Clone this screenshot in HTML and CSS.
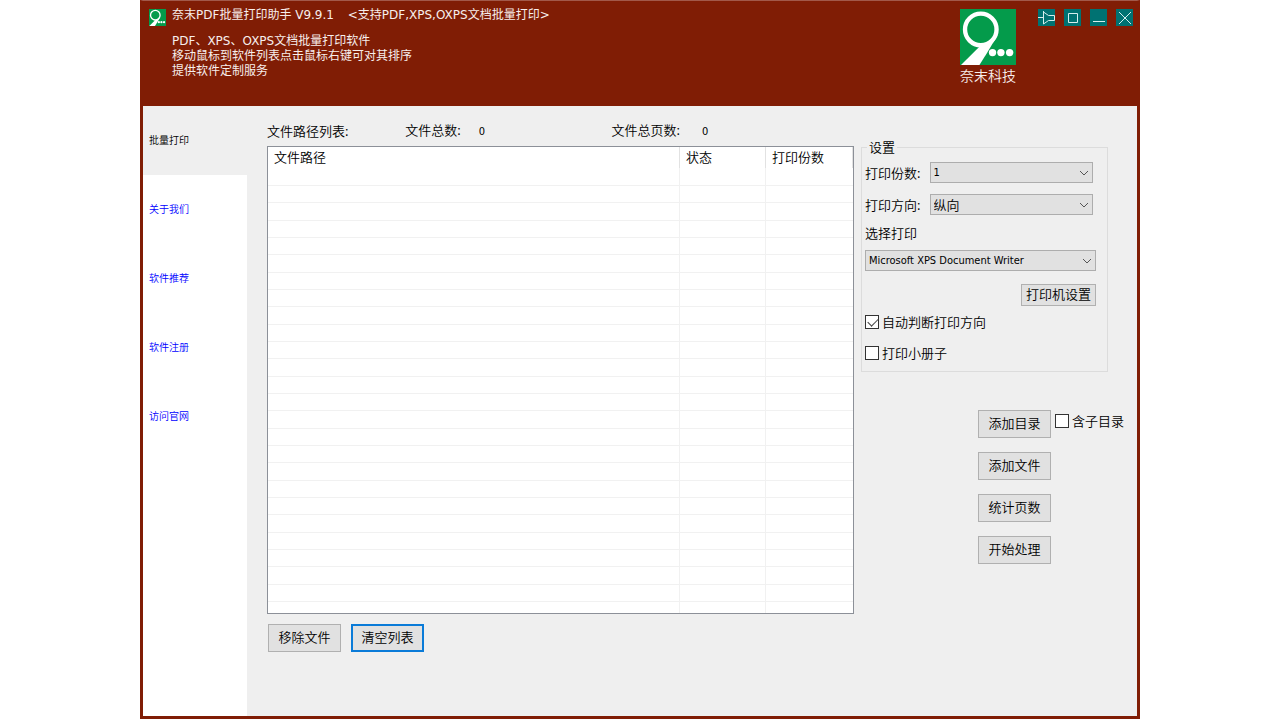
FILE: index.html
```html
<!DOCTYPE html>
<html lang="zh-CN">
<head>
<meta charset="utf-8">
<title>奈末PDF批量打印助手</title>
<link rel="stylesheet" href="styles.css">
</head>
<body>
<svg class="defs" width="0" height="0" aria-hidden="true">
  <symbol id="logo" viewBox="0 0 167 167">
    <rect width="167" height="167" fill="#049b4b"/>
    <path d="M3 167 60 110 112 78 80 132 58 167Z" fill="#fff"/>
    <circle cx="62" cy="61" r="47" fill="#049b4b" stroke="#fff" stroke-width="13"/>
    <circle cx="97" cy="130" r="11" fill="#fff"/>
    <circle cx="122" cy="130" r="11" fill="#fff"/>
    <circle cx="148" cy="130" r="11" fill="#fff"/>
  </symbol>
  <symbol id="chevron" viewBox="0 0 10 6"><path d="M1 1 5 5 9 1" fill="none" stroke="#555"/></symbol>
</svg>
<div class="window">
  <header class="titlebar">
    <svg class="app-icon"><use href="#logo"/></svg>
    <div class="heading">
      <h1 class="title">奈末PDF批量打印助手 V9.9.1 <span class="support">&lt;支持PDF,XPS,OXPS文档批量打印&gt;</span></h1>
      <p class="intro">PDF、XPS、OXPS文档批量打印软件<br>移动鼠标到软件列表点击鼠标右键可对其排序<br>提供软件定制服务</p>
    </div>
    <div class="brand">
      <svg class="brand-logo"><use href="#logo"/></svg>
      <span>奈末科技</span>
    </div>
    <div class="controls">
      <button type="button" class="control" aria-label="置顶"><svg viewBox="0 0 17 17"><path d="M0 8.5H5.500M5.500 2V15M5.500 3 10.500 6.500H16.500V11.500H10.500L5.500 15"/></svg></button>
      <button type="button" class="control" aria-label="最大化"><svg viewBox="0 0 17 17"><path d="M4.500 4.500H13.500V13.500H4.500Z"/></svg></button>
      <button type="button" class="control" aria-label="最小化"><svg viewBox="0 0 17 17"><path d="M3 12.500H15"/></svg></button>
      <button type="button" class="control" aria-label="关闭"><svg viewBox="0 0 17 17"><path d="M3 3 15 15M15 3 3 15"/></svg></button>
    </div>
  </header>
  <div class="content">
    <nav class="sidebar">
      <a class="nav-item active" href="#">批量打印</a>
      <a class="nav-item" href="#">关于我们</a>
      <a class="nav-item" href="#">软件推荐</a>
      <a class="nav-item" href="#">软件注册</a>
      <a class="nav-item" href="#">访问官网</a>
    </nav>
    <main class="main">
      <section class="files">
        <div class="summary">
          <span class="summary-title">文件路径列表:</span>
          <span class="summary-files">文件总数:<output class="count">0</output></span>
          <span class="summary-pages">文件总页数:<output class="count">0</output></span>
        </div>
        <div class="list">
          <table class="table">
            <colgroup><col><col class="col-state"><col class="col-copies"></colgroup>
            <thead><tr><th>文件路径</th><th>状态</th><th>打印份数</th></tr></thead>
            <tbody>
              <tr><td></td><td></td><td></td></tr>
              <tr><td></td><td></td><td></td></tr>
              <tr><td></td><td></td><td></td></tr>
              <tr><td></td><td></td><td></td></tr>
              <tr><td></td><td></td><td></td></tr>
              <tr><td></td><td></td><td></td></tr>
              <tr><td></td><td></td><td></td></tr>
              <tr><td></td><td></td><td></td></tr>
              <tr><td></td><td></td><td></td></tr>
              <tr><td></td><td></td><td></td></tr>
              <tr><td></td><td></td><td></td></tr>
              <tr><td></td><td></td><td></td></tr>
              <tr><td></td><td></td><td></td></tr>
              <tr><td></td><td></td><td></td></tr>
              <tr><td></td><td></td><td></td></tr>
              <tr><td></td><td></td><td></td></tr>
              <tr><td></td><td></td><td></td></tr>
              <tr><td></td><td></td><td></td></tr>
              <tr><td></td><td></td><td></td></tr>
              <tr><td></td><td></td><td></td></tr>
              <tr><td></td><td></td><td></td></tr>
              <tr><td></td><td></td><td></td></tr>
              <tr><td></td><td></td><td></td></tr>
              <tr><td></td><td></td><td></td></tr>
              <tr><td></td><td></td><td></td></tr>
              <tr class="last"><td></td><td></td><td></td></tr>
            </tbody>
          </table>
        </div>
        <div class="list-actions">
          <button type="button" class="button">移除文件</button>
          <button type="button" class="button focused">清空列表</button>
        </div>
      </section>
      <section class="side">
        <fieldset class="settings">
          <legend>设置</legend>
          <div class="field">
            <label for="copies">打印份数:</label>
            <div class="select"><select id="copies" class="small"><option>1</option></select><svg class="chevron"><use href="#chevron"/></svg></div>
          </div>
          <div class="field">
            <label for="direction">打印方向:</label>
            <div class="select"><select id="direction"><option>纵向</option></select><svg class="chevron"><use href="#chevron"/></svg></div>
          </div>
          <label class="printer-label" for="printer">选择打印</label>
          <div class="select"><select id="printer" class="small"><option>Microsoft XPS Document Writer</option></select><svg class="chevron"><use href="#chevron"/></svg></div>
          <button type="button" class="button printer-button">打印机设置</button>
          <label class="check"><input type="checkbox" checked>自动判断打印方向</label>
          <label class="check"><input type="checkbox">打印小册子</label>
        </fieldset>
        <div class="actions">
          <div class="add-folder">
            <button type="button" class="button">添加目录</button>
            <label class="check"><input type="checkbox">含子目录</label>
          </div>
          <button type="button" class="button">添加文件</button>
          <button type="button" class="button">统计页数</button>
          <button type="button" class="button">开始处理</button>
        </div>
      </section>
    </main>
  </div>
</div>
</body>
</html>
```
FILE: styles.css
```css
* { box-sizing: border-box; }

body {
  margin: 0;
  padding: 0 140px 1px;
  background: #fff;
  color: #000;
  font: 13px/18px "Noto Sans CJK SC", sans-serif;
  font-weight: 350;
}

button, select, input { margin: 0; font: inherit; color: inherit; }
.defs { position: absolute; }

.window {
  display: flex;
  flex-direction: column;
  min-height: calc(100vh - 1px);
  border: 3px solid #801d05;
  border-top: 1px solid #a2594a;
}

.titlebar {
  display: flex;
  align-items: flex-start;
  min-height: 105px;
  padding: 8px 4px 0 6px;
  background: #801d05;
  color: #f7eeec;
}
.app-icon { width: 17px; height: 17px; }
.heading { flex: 1; padding-left: 6px; font: 400 12px/15px "DejaVu Sans", "Noto Sans CJK SC", sans-serif; }
.title { margin: 0; font: inherit; line-height: 13px; }
.support { margin-left: 10px; }
.intro { margin: 12px 0 0; line-height: 15px; }
.brand { display: flex; flex-direction: column; align-items: center; margin-right: 22px; font-size: 14px; line-height: 20px; }
.brand-logo { width: 56px; height: 56px; }

.controls { display: flex; gap: 9px; }
.control { display: flex; width: 17px; height: 17px; padding: 0; border: 0; background: #007272; }
.control svg { width: 17px; height: 17px; fill: none; stroke: #d5eeee; }

.content { display: flex; flex: 1; background: #efefef; }
.sidebar { width: 104px; background: #fff; }
.nav-item {
  display: block;
  padding: 0 0 2px 6px;
  color: #00f;
  font-size: 10px;
  line-height: 67px;
  text-decoration: none;
}
.nav-item.active { background: #efefef; color: #000; }

.main { display: flex; flex: 1; gap: 7px; padding-left: 20px; }
.files { flex: 1; min-width: 0; }

.summary { display: flex; height: 40px; padding-top: 15px; }
.summary-title { flex: 138 1 0; padding-top: 1px; }
.summary-files { flex: 206 1 0; }
.summary-pages { flex: 242 1 0; }
.count { margin-left: 18px; font-family: "DejaVu Sans Condensed", sans-serif; font-size: 11px; font-weight: 400; }
.summary-pages .count { margin-left: 22px; }

.list { border: 1px solid #8c9098; background: #fff; }
.table { width: 100%; border-collapse: collapse; table-layout: fixed; }
.col-state { width: 86px; }
.col-copies { width: 87px; }
.table th { height: 21px; padding: 0 0 2px 6px; border-right: 1px solid #e2e2e2; font-weight: 350; line-height: 18px; text-align: left; }
.table td { height: 17px; padding: 0; border-right: 1px solid #f1f1f1; border-bottom: 1px solid #f1f1f1; }
.table tr:nth-child(3n) td { height: 18px; }
.table td:last-child { border-right: 0; }
.table .last td { height: 12px; border-bottom: 0; }

.button {
  width: 73px;
  height: 28px;
  padding: 0 0 2px;
  border: 1px solid #b0b0b0;
  background: #e1e1e1;
  line-height: 18px;
  white-space: nowrap;
}
.button.focused { border: 2px solid #0a7bd8; }
.list-actions { display: flex; gap: 10px; padding: 10px 0 0 1px; }

.side { width: 276px; padding-top: 32px; }
.settings {
  display: flex;
  flex-direction: column;
  width: 247px;
  margin: 0;
  padding: 6px 11px 9px 3px;
  border: 1px solid #dcdcdc;
}
.settings legend { margin-left: 2px; padding: 0 2px; line-height: 18px; }
.field { display: flex; align-items: center; gap: 9px; margin: 0 3px 11px 0; }
.field .select { flex: 1; }
.select { position: relative; height: 21px; }
.select select {
  appearance: none;
  display: block;
  width: 100%;
  height: 21px;
  padding: 0 20px 0 3px;
  border: 1px solid #adadad;
  border-radius: 0;
  background: #e1e1e1;
  line-height: 18px;
}
.select .small { font-family: "DejaVu Sans Condensed", sans-serif; font-size: 11px; font-weight: 400; }
.chevron { position: absolute; top: 8px; right: 4px; width: 10px; height: 6px; pointer-events: none; }
.printer-label { margin: -2px 0 8px; }
.printer-button { align-self: flex-end; width: 75px; height: 22px; margin: 13px 0 7px; }

.check { display: flex; align-items: center; gap: 3px; white-space: nowrap; }
.settings .check { margin-bottom: 13px; }
.settings .check:last-child { margin-bottom: 0; }
.check input {
  appearance: none;
  width: 14px;
  height: 14px;
  border: 1px solid #333;
  background: #fff;
}
.check input:checked::before {
  content: "";
  display: block;
  width: 9px;
  height: 5px;
  margin: 2px 0 0 2px;
  border: solid #444;
  border-width: 0 0 1px 1px;
  transform: rotate(-45deg);
}

.actions { display: flex; flex-direction: column; gap: 14px; padding: 38px 0 0 117px; }
.add-folder { display: flex; align-items: flex-start; gap: 4px; }
.add-folder .check { padding-top: 2px; }
```
